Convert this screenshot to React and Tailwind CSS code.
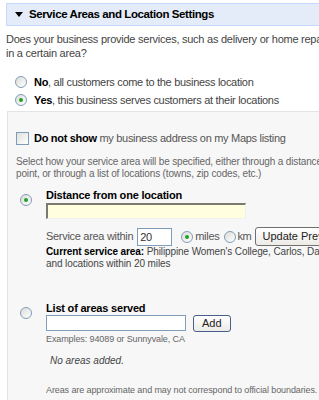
import React from "react";

function Radio({ checked, className = "" }) {
  return (
    <span className={"relative inline-block w-[12px] h-[12px] rounded-full border border-[#7f9db9] bg-gradient-to-br from-[#dcdcd7] to-white shrink-0 " + className}>
      {checked && <span className="absolute left-[3px] top-[3px] w-[4px] h-[4px] rounded-full bg-[#21a121]" />}
    </span>
  );
}

export default function App() {
  return (
    <div className="w-[319px] h-[400px] overflow-hidden bg-white text-[#333] font-['Liberation_Sans',Arial,sans-serif]">
      <div className="pt-[3px] pl-[6px]">
        <div className="h-[23px] bg-[#e5ecf9] border border-[#c3d9ff] border-r-0 flex items-center pl-[8px]">
          <svg width="8" height="6" viewBox="0 0 8 6" className="mr-[6px] shrink-0"><path d="M0 0 H8 L4 5 Z" fill="#000" /></svg>
          <span className="text-[11.5px] tracking-[-0.4px] font-bold text-black whitespace-nowrap">Service Areas and Location Settings</span>
        </div>
      </div>
      <div className="pl-[6px] pt-[6px] text-[11px] tracking-[-0.25px] leading-[14px] text-[#444] whitespace-nowrap">
        <div>Does your business provide services, such as delivery or home repair,</div>
        <div>in a certain area?</div>
      </div>
      <div className="pl-[15px] pt-[13px] text-[11px] tracking-[-0.3px] leading-[18px] text-[#444] whitespace-nowrap">
        <div className="flex items-center gap-[7px]"><Radio /><span><b className="text-black">No</b>, all customers come to the business location</span></div>
        <div className="flex items-center gap-[7px]"><Radio checked /><span><b className="text-black">Yes</b>, this business serves customers at their locations</span></div>
      </div>
      <div className="ml-[7px] mt-[2px] h-[300px] bg-[#f7f7f7] border-l border-t border-[#e4e4e4] pl-[8px] pt-[19px] text-[#555] whitespace-nowrap">
        <div className="flex items-center gap-[5px] text-[11px] tracking-[-0.3px] leading-[14px]">
          <span className="inline-block shrink-0 w-[13px] h-[13px] border border-[#7f9db9] bg-gradient-to-br from-[#e0e0dc] to-white" />
          <span><b className="text-black">Do not show</b> my business address on my Maps listing</span>
        </div>
        <div className="mt-[11px] text-[10px] tracking-[-0.15px] leading-[12px] text-[#666]">
          <div>Select how your service area will be specified, either through a distance from a</div>
          <div>point, or through a list of locations (towns, zip codes, etc.)</div>
        </div>
        <div className="mt-[8px] flex">
          <div className="w-[30px] shrink-0 pl-[4px] pt-[1px]"><Radio checked /></div>
          <div className="flex-1">
            <div className="text-[11px] tracking-[-0.2px] font-bold text-black leading-[14px]">Distance from one location</div>
            <div className="mt-[1px] w-[200px] h-[16px] bg-[#ffffe0] border-t-2 border-l-2 border-[#7a7a6e] border-b border-r border-b-[#f0f0f0] border-r-[#f0f0f0]" />
            <div className="mt-[8px] h-[19px] flex items-center text-[11px] tracking-[-0.3px] text-[#555]">
              <span>Service area within</span>
              <span className="ml-[4px] w-[35px] h-[18px] shrink-0 bg-white border border-[#7f9db9] text-[11px] leading-[16px] pl-[2px] text-[#333]">20</span>
              <Radio checked className="ml-[9px]" />
              <span className="ml-[2px]">miles</span>
              <Radio className="ml-[5px]" />
              <span className="ml-[1px]">km</span>
              <span className="ml-[4px] h-[19px] px-[6px] shrink-0 border border-[#707070] rounded-[3px] bg-gradient-to-b from-white to-[#ecebe6] text-[11px] tracking-normal leading-[17px] text-[#222]">Update Preview</span>
            </div>
            <div className="text-[10px] tracking-[-0.1px] leading-[12px] text-[#444]">
              <div><b className="text-black">Current service area:</b> Philippine Women's College, Carlos, Davao</div>
              <div>and locations within 20 miles</div>
            </div>
          </div>
        </div>
        <div className="mt-[31px] flex">
          <div className="w-[30px] shrink-0 pl-[4px] pt-[1px]"><Radio /></div>
          <div className="flex-1">
            <div className="text-[11px] tracking-[-0.2px] font-bold text-black leading-[14px]">List of areas served</div>
            <div className="flex items-start">
              <span className="inline-block shrink-0 w-[140px] h-[16px] bg-white border border-[#7f9db9]" />
              <span className="ml-[7px] h-[17px] px-[8px] shrink-0 border border-[#4a5f8c] rounded-[3px] bg-gradient-to-b from-white to-[#ecebe6] text-[11px] leading-[15px] text-[#222]">Add</span>
            </div>
            <div className="mt-[1px] text-[9px] tracking-[-0.1px] leading-[12px] text-[#666]">Examples: 94089 or Sunnyvale, CA</div>
            <div className="mt-[9px] pl-[4px] text-[10px] leading-[13px] italic text-[#444]">No areas added.</div>
            <div className="mt-[17px] text-[9px] tracking-[-0.1px] leading-[12px] text-[#666]">Areas are approximate and may not correspond to official boundaries.</div>
          </div>
        </div>
      </div>
    </div>
  );
}
